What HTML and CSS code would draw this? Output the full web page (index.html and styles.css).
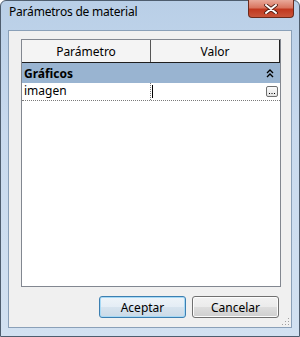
FILE: index.html
```html
<!DOCTYPE html>
<html lang="es">
<head>
    <meta charset="UTF-8">
    <title>Parámetros de material</title>
    <link rel="stylesheet" href="styles.css">
</head>
<body>
    <div class="window">
        <div class="titlebar">
            <span class="title">Parámetros de material</span>
            <button class="close-btn" type="button">
                <svg width="14" height="10" viewBox="0 0 14 10">
                    <path d="M2 1 L12 9 M12 1 L2 9" stroke="#4a1a10" stroke-width="3.6" stroke-linecap="round"/>
                    <path d="M2 1 L12 9 M12 1 L2 9" stroke="#fff" stroke-width="2" stroke-linecap="round"/>
                </svg>
            </button>
        </div>

        <div class="client">
            <div class="grid">
                <div class="grid-head">
                    <div class="head-cell">Parámetro</div>
                    <div class="head-cell last">Valor</div>
                </div>
                <div class="category">
                    <span>Gráficos</span>
                    <svg class="collapse" width="8" height="9" viewBox="0 0 8 9">
                        <path d="M1 4 L4 1 L7 4 M1 8 L4 5 L7 8" fill="none" stroke="#000" stroke-width="1.4"/>
                    </svg>
                </div>
                <div class="prop-row">
                    <div class="prop-name">imagen</div>
                    <div class="prop-value">
                        <span class="caret"></span>
                        <span class="ellipsis-btn">
                            <svg width="10" height="9" viewBox="0 0 10 9">
                                <rect x="2" y="6" width="1" height="1" fill="#000"/>
                                <rect x="4.5" y="6" width="1" height="1" fill="#000"/>
                                <rect x="7" y="6" width="1" height="1" fill="#000"/>
                            </svg>
                        </span>
                    </div>
                </div>
            </div>

            <div class="actions">
                <button class="btn default" type="button">Aceptar</button>
                <button class="btn" type="button">Cancelar</button>
            </div>
            <span class="grip"></span>
        </div>
    </div>
</body>
</html>
```

FILE: styles.css
```css
* { box-sizing: border-box; }
body { margin: 0; font-family: "Noto Sans", "Open Sans", sans-serif; font-size: 12px; color: #000; background: #fff; }

.window {
    width: 300px; height: 337px;
    border: 1px solid #4e5d6e;
    border-radius: 6px 6px 0 0;
    background: linear-gradient(180deg, #b9cfe7 0%, #c9daee 40%, #d2e1f1 100%);
    display: flex; flex-direction: column;
}

.titlebar { height: 29px; display: flex; align-items: flex-start; justify-content: space-between; padding-left: 8px; padding-right: 5px; }
.title { margin-top: 2px; font-size: 12px; letter-spacing: -0.2px; color: #000; }
.close-btn {
    width: 46px; height: 18px; margin: -1px 0 0 0; padding: 0;
    border: 1px solid #6b2a1c; border-top: none;
    border-radius: 0 0 4px 4px;
    background: linear-gradient(180deg, #e9a99a 0%, #d9755f 45%, #c1381f 55%, #c9553a 100%);
    display: flex; align-items: center; justify-content: center;
}

.client {
    position: relative;
    height: 298px; margin: 0 7px;
    border: 1px solid #8aa0b8;
    background: #f0f0f0;
    padding: 8px 11px 0 12px;
}

.grid { height: 248px; width: 260px; border: 1px solid #828790; background: #fff; }
.grid-head { display: flex; height: 23px; border-bottom: 1px solid #1e1e1e; background: #f4f4f4; }
.head-cell { width: 129px; display: flex; align-items: center; justify-content: center; border-right: 1px solid #555; }
.head-cell.last { flex: 1; border-right: 1px solid #222; }

.category { height: 20px; background: #99b4d1; display: flex; align-items: center; justify-content: space-between; padding: 0 6px 0 2px; font-weight: bold; }

.prop-row { display: flex; height: 18px; border-bottom: 1px dotted #7a7a7a; }
.prop-name { width: 129px; padding-left: 2px; line-height: 16px; border-right: 1px dotted #7a7a7a; }
.prop-value { flex: 1; display: flex; align-items: center; justify-content: space-between; padding: 0 2px 0 1px; }
.caret { width: 1px; height: 13px; background: #000; }
.ellipsis-btn {
    width: 12px; height: 11px;
    border: 1px solid #707070; border-radius: 2px;
    background: linear-gradient(#fbfbfb, #e3e3e3);
    display: flex;
}

.actions { display: flex; justify-content: flex-end; gap: 6px; margin-top: 9px; padding-right: 1px; }
.btn {
    width: 87px; height: 22px;
    font-family: inherit; font-size: 12px; color: #000;
    border: 1px solid #707070; border-radius: 3px;
    background: linear-gradient(180deg, #f2f2f2 0%, #ebebeb 50%, #dddddd 51%, #cfcfcf 100%);
    box-shadow: inset 0 0 0 1px #fcfcfc;
}
.btn.default {
    border-color: #3c7fb1;
    background: linear-gradient(180deg, #eef4f9 0%, #e4edf5 50%, #d6e3ee 51%, #cbdae7 100%);
    box-shadow: inset 0 0 0 1px #a7d9f5;
}

.grip {
    position: absolute; right: 2px; bottom: 2px; width: 8px; height: 8px;
    background: radial-gradient(circle, #a0a0a0 0.8px, transparent 1px) 0 0 / 3px 3px;
    clip-path: polygon(100% 0, 100% 100%, 0 100%);
}
```
